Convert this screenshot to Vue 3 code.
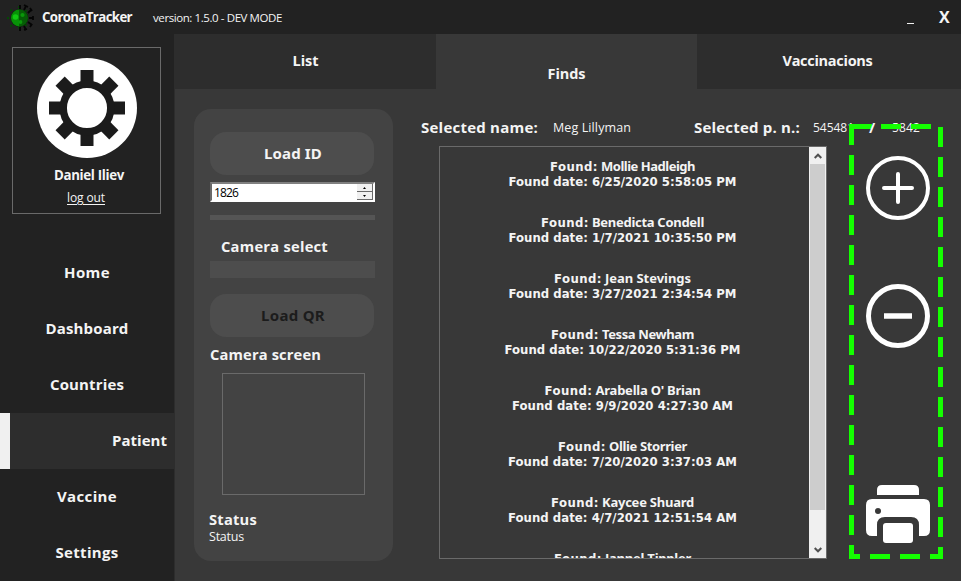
<script setup>
import { ref } from 'vue'

const vFit = {
  mounted(el, { value }) {
    const natural = el.getBoundingClientRect().width
    const count = el.textContent.length
    el.style.letterSpacing = `${(value - natural) / count}px`
  },
}

const personId = ref('1826')
const menu = [
  { label: 'Home', w: 46 },
  { label: 'Dashboard', w: 83 },
  { label: 'Countries', w: 74 },
  { label: 'Patient', w: 55, active: true },
  { label: 'Vaccine', w: 60 },
  { label: 'Settings', w: 63 },
]
const tabs = [
  { label: 'List', w: 26 },
  { label: 'Finds', w: 38, active: true },
  { label: 'Vaccinacions', w: 90 },
]
const finds = [
  { name: 'Mollie Hadleigh', nw: 94, date: '6/25/2020 5:58:05 PM', w: 228 },
  { name: 'Benedicta Condell', nw: 112, date: '1/7/2021 10:35:50 PM', w: 228 },
  { name: 'Jean Stevings', nw: 86, date: '3/27/2021 2:34:54 PM', w: 228 },
  { name: 'Tessa Newham', nw: 92, date: '10/22/2020 5:31:36 PM', w: 236 },
  { name: "Arabella O' Brian", nw: 105, date: '9/9/2020 4:27:30 AM', w: 221 },
  { name: 'Ollie Storrier', nw: 78, date: '7/20/2020 3:37:03 AM', w: 229 },
  { name: 'Kaycee Shuard', nw: 92, date: '4/7/2021 12:51:54 AM', w: 229 },
  { name: 'Jannel Tippler', nw: 86 },
]
</script>

<template>
  <div class="window">
    <header class="titlebar">
      <svg class="logo" viewBox="0 0 28 28">
        <g stroke="#044804" stroke-width="1.8" stroke-dasharray="2 1.5">
          <path d="M13 2v24M1 14h12M4.500 5.500l17 17M4.500 22.500l17-17" />
        </g>
        <g stroke="#050505" stroke-width="1.800" fill="none">
          <path d="M14 5V1M18 6l2-4M22 9l3-3M23 14h4M22 18l4 3M18 22l2 4M14 23v4" />
          <path d="M18 1l4 2M24 4l2 3M27 12v4M26 20l-2 3M21 25l-3 1" />
        </g>
        <circle cx="13.500" cy="14" r="8.800" fill="#052b05" />
        <path d="M13.500 5.500a8.500 8.500 0 0 0 0 17z" fill="#079207" />
        <path d="M13.500 5.500a8.500 8.500 0 0 1 0 17z" fill="#065d06" />
        <circle cx="9.500" cy="13" r="2.800" fill="#12c812" />
        <circle cx="16.500" cy="11" r="2.100" fill="#0a970a" />
        <circle cx="14.500" cy="18" r="1.900" fill="#0a970a" />
      </svg>
      <b class="brand"><span v-fit="90">CoronaTracker</span></b>
      <span class="version"><span v-fit="129">version: 1.5.0 - DEV MODE</span></span>
      <span class="minimize"></span>
      <b class="close">X</b>
    </header>

    <div class="body">
      <aside class="sidebar">
        <section class="profile">
          <svg class="avatar" viewBox="0 0 100 100">
            <circle cx="50" cy="50" r="50" fill="#fff" />
            <g fill="#1b1b1b">
              <path v-for="a in 8" :key="a" :transform="`rotate(${a * 45} 50 50)`" d="M43.500 12h13v14h-13z" />
            </g>
            <circle cx="50" cy="50" r="23.800" fill="#fff" stroke="#1b1b1b" stroke-width="7.500" />
          </svg>
          <b class="user"><span v-fit="70">Daniel Iliev</span></b>
          <a class="logout"><span v-fit="38">log out</span></a>
        </section>
        <nav class="menu">
          <div v-for="m in menu" :key="m.label" class="menu-item" :class="{ active: m.active }">
            <span v-fit="m.w">{{ m.label }}</span>
          </div>
        </nav>
      </aside>

      <main class="main">
        <div class="tabs">
          <div v-for="t in tabs" :key="t.label" class="tab" :class="{ current: t.active }">
            <span v-fit="t.w">{{ t.label }}</span>
          </div>
        </div>

        <div class="content">
          <section class="panel">
            <button class="btn"><span v-fit="58">Load ID</span></button>
            <div class="spinner">
              <span class="value"><span v-fit="24">{{ personId }}</span></span>
              <span class="steps">
                <i><svg viewBox="0 0 3 2"><path d="M0 2L1.500 0L3 2z" /></svg></i>
                <i><svg viewBox="0 0 3 2"><path d="M0 0L1.500 2L3 0z" /></svg></i>
              </span>
            </div>
            <div class="rule"></div>
            <b class="label select-label"><span v-fit="107">Camera select</span></b>
            <div class="select"></div>
            <button class="btn qr"><span v-fit="64">Load QR</span></button>
            <b class="label"><span v-fit="111">Camera screen</span></b>
            <div class="camera"></div>
            <b class="label status"><span v-fit="48">Status</span></b>
            <span class="status-text"><span v-fit="35">Status</span></span>
          </section>

          <section class="results">
            <div class="selected">
              <b class="sel-name"><span v-fit="117">Selected name:</span></b>
              <span class="sel-value"><span v-fit="78">Meg Lillyman</span></span>
              <b class="sel-pn"><span v-fit="106">Selected p. n.:</span></b>
              <span class="sel-num"><span v-fit="41">545481</span></span>
              <b class="slash">/</b>
              <span class="sel-tail"><span v-fit="28">5842</span></span>
            </div>
            <div class="columns">
              <div class="list">
                <div class="rows">
                  <div v-for="f in finds" :key="f.name" class="row">
                    <div class="line"><span v-fit="48" class="found">Found:</span><span v-fit="f.nw" class="name">{{ f.name }}</span></div>
                    <div v-if="f.date" class="line"><span v-fit="f.w">Found date: {{ f.date }}</span></div>
                  </div>
                </div>
                <div class="scroll">
                  <svg class="arrow" viewBox="0 0 8 6"><path d="M.7 5L4 1.700L7.300 5" /></svg>
                  <div class="thumb"></div>
                  <svg class="arrow down" viewBox="0 0 8 6"><path d="M.7 1L4 4.300L7.300 1" /></svg>
                </div>
              </div>
              <div class="actions">
                <svg class="frame" viewBox="0 0 94 435">
                  <g fill="none" stroke="#14ff00" stroke-width="5">
                    <path d="M2.500 0V2M2.500 1V435" stroke-dasharray="20 10" />
                    <path d="M0 2.500H82" stroke-dasharray="23 9 20 10 20 10" />
                    <path d="M91.500 3V435" stroke-dasharray="20 10" />
                    <path d="M0 432.500H94" stroke-dasharray="11 10 20 10 20 10 13 0" />
                  </g>
                </svg>
                <svg class="icon" viewBox="0 0 64 64">
                  <circle cx="32" cy="32" r="30" fill="none" stroke="#fff" stroke-width="4" />
                  <path d="M18 32h28M32 18v28" stroke="#fff" stroke-width="4" stroke-linecap="round" />
                </svg>
                <svg class="icon minus" viewBox="0 0 64 64">
                  <circle cx="32" cy="32" r="29.500" fill="none" stroke="#fff" stroke-width="5" />
                  <path d="M18 32h28" stroke="#fff" stroke-width="5.500" />
                </svg>
                <svg class="icon printer" viewBox="0 0 64 58">
                  <path d="M11 10V5Q11 0 16 0H48Q53 0 53 5V10z" fill="#fff" />
                  <path d="M6 14H58Q64 14 64 20V45Q64 51 58 51H53V40Q53 32 45 32H19Q11 32 11 40V51H6Q0 51 0 45V20Q0 14 6 14z" fill="#fff" />
                  <circle cx="12" cy="26" r="3" fill="#383838" />
                  <rect x="17" y="38" width="30" height="20" rx="3" fill="#fff" />
                </svg>
              </div>
            </div>
          </section>
        </div>
      </main>
    </div>
  </div>
</template>

<style>
body {
  margin: 0;
  overflow: hidden;
  background: #383838;
}
</style>

<style scoped>
* {
  box-sizing: border-box;
}
.window {
  width: 961px;
  height: 581px;
  display: flex;
  flex-direction: column;
  overflow: hidden;
  background: #383838;
  color: #f4f4f4;
  font-family: 'Open Sans', 'Noto Sans', sans-serif;
  font-size: 15px;
  white-space: nowrap;
}
.titlebar {
  height: 34px;
  display: flex;
  align-items: center;
  padding-left: 6px;
  background: #222;
}
.logo {
  width: 28px;
  height: 28px;
  margin-top: 2px;
}
.brand {
  width: 111px;
  padding-left: 8px;
  font-size: 13.300px;
  box-sizing: content-box;
}
.version {
  flex: 1;
  font-size: 11.500px;
  padding-top: 1px;
}
.minimize {
  width: 7px;
  height: 1px;
  margin: 13px 25px 0 0;
  background: #f0f0f0;
}
.close {
  width: 22px;
  font-size: 16px;
}
.body {
  flex: 1;
  display: flex;
}
.sidebar {
  width: 175px;
  background: #222;
  border-right: 1px solid #2d2d2d;
}
.profile {
  width: 149px;
  height: 167px;
  margin: 13px 0 0 12px;
  padding: 10px 0 0 1px;
  display: flex;
  flex-direction: column;
  align-items: center;
  border: 1px solid #6a6a6a;
}
.avatar {
  width: 100px;
  height: 100px;
  flex: none;
}
.user {
  margin-top: 7px;
  padding-left: 4px;
  font-size: 13.300px;
  line-height: 20px;
}
.logout {
  margin: 4px 2px 0 0;
  font-size: 12px;
  line-height: 18px;
  text-decoration: underline;
  text-underline-offset: 2px;
}
.menu {
  margin-top: 31px;
}
.menu-item {
  height: 56px;
  display: flex;
  align-items: center;
  justify-content: center;
  padding-bottom: 3px;
  font-weight: 700;
}
.menu-item.active {
  justify-content: flex-end;
  padding-right: 7px;
  border-left: 10px solid #f0f0f0;
  background: #2d2d2d;
}
.main {
  flex: 1;
  display: flex;
  flex-direction: column;
}
.tabs {
  height: 55px;
  display: grid;
  grid-template-columns: 261px 261px 1fr;
}
.tab {
  display: flex;
  justify-content: center;
  padding: 17px 3px 0 0;
  line-height: 20px;
  background: #2d2d2d;
  font-weight: 700;
  font-size: 14.500px;
}
.tab:first-child {
  padding-right: 0;
}
.tab.current {
  padding: 30px 0 0;
  background: #383838;
}
.content {
  flex: 1;
  display: flex;
}
.panel {
  width: 199px;
  height: 452px;
  margin: 20px 0 0 19px;
  padding: 23px 18px 0 16px;
  display: flex;
  flex-direction: column;
  border-radius: 17px;
  background: #434343;
}
.btn {
  width: 164px;
  height: 43px;
  flex: none;
  padding: 0 0 1px 2px;
  border: 0;
  border-radius: 16px;
  background: #4d4d4d;
  color: #f4f4f4;
  font: 700 15px 'Noto Sans', sans-serif;
}
.btn.qr {
  margin-top: 16px;
  color: #1c1c1c;
}
.spinner {
  height: 20px;
  flex: none;
  margin-top: 7px;
  display: flex;
  justify-content: space-between;
  border: 2px solid #696969;
  border-top-color: #808080;
  border-right-color: #fff;
  border-bottom-color: #fff;
  background: #fff;
  color: #000;
}
.value {
  padding-left: 2px;
  font-size: 12px;
  line-height: 17px;
}
.steps {
  width: 16px;
  display: flex;
  flex-direction: column;
}
.steps i {
  flex: 1;
  display: flex;
  align-items: center;
  justify-content: center;
  background: #f0f0f0;
  border-right: 1px solid #696969;
  border-bottom: 1px solid #696969;
}
.steps svg {
  width: 3px;
  height: 2px;
}
.rule {
  height: 5px;
  flex: none;
  margin-top: 13px;
  background: #555;
}
.label {
  font-size: 14.700px;
  line-height: 20px;
  margin-top: 7px;
}
.select-label {
  margin-top: 16px;
  padding-left: 11px;
}
.select {
  height: 17px;
  flex: none;
  margin-top: 5px;
  background: #4d4d4d;
}
.camera {
  width: 143px;
  height: 122px;
  flex: none;
  margin: 9px 0 0 12px;
  border: 1px solid #6a6a6a;
}
.status {
  margin: 14px 0 0 -1px;
}
.status-text {
  margin: -1px 0 0 -1px;
  font-size: 12.500px;
  line-height: 18px;
}
.results {
  flex: 1;
  padding-left: 28px;
}
.selected {
  height: 57px;
  display: flex;
  align-items: center;
  padding-top: 18px;
  font-size: 15px;
}
.sel-name {
  width: 132px;
}
.sel-value {
  width: 141px;
  font-size: 12.500px;
  padding-top: 1px;
}
.sel-pn {
  width: 119px;
}
.sel-num {
  width: 56px;
  font-size: 12px;
  padding-top: 1px;
}
.slash {
  position: relative;
  z-index: 1;
  width: 23px;
}
.sel-tail {
  font-size: 12px;
  padding-top: 1px;
}
.columns {
  display: flex;
}
.list {
  width: 388px;
  height: 413px;
  margin-left: 18px;
  display: flex;
  border: 1px solid #6a6a6a;
}
.rows {
  flex: 1;
  overflow: hidden;
  padding: 12px 4px 0 0;
  font: 700 13px/15px 'DejaVu Sans Condensed', 'DejaVu Sans', sans-serif;
}
.row {
  height: 56px;
}
.line {
  display: flex;
  justify-content: center;
}
.found {
  margin-right: 3px;
}
.name {
  font-family: 'Noto Sans', sans-serif;
  font-size: 13px;
}
.scroll {
  width: 17px;
  padding: 0 1px;
  display: flex;
  flex-direction: column;
  align-items: center;
  justify-content: space-between;
  background: #f0f0f0;
}
.arrow {
  width: 8px;
  height: 6px;
  margin-top: 6px;
  fill: none;
  stroke: #505050;
  stroke-width: 2;
}
.arrow.down {
  margin: 0 0 5px;
}
.thumb {
  align-self: stretch;
  height: 346px;
  margin: 5px 0 auto;
  background: #cdcdcd;
}
.actions {
  position: relative;
  width: 94px;
  height: 413px;
  margin-left: 22px;
  padding: 10px 0 0 17px;
  display: flex;
  flex-direction: column;
}
.frame {
  position: absolute;
  left: 0;
  top: -22px;
  width: 94px;
  height: 435px;
}
.icon {
  width: 64px;
  height: 64px;
  flex: none;
}
.minus {
  margin-top: 64px;
}
.printer {
  height: 58px;
  margin-top: 137px;
}
</style>
